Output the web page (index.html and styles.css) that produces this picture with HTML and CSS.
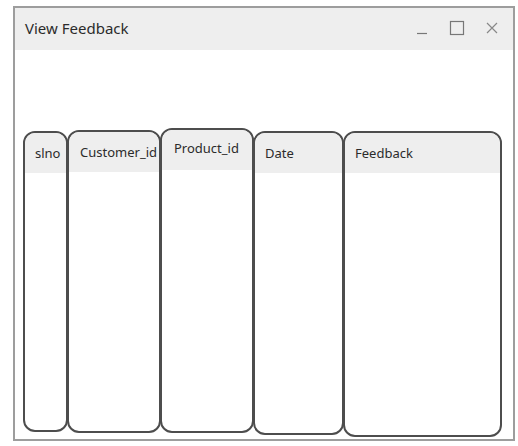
FILE: index.html
```html
<!DOCTYPE html>
<html>
<head>
<meta charset="utf-8">
<link rel="stylesheet" href="styles.css">
</head>
<body>
<div class="window">
  <div class="titlebar">
    <span class="title">View Feedback</span>
    <div class="controls">
      <svg class="ctl" width="12" height="14" viewBox="0 0 12 14"><line x1="1" y1="12.5" x2="11" y2="12.5" stroke="#777" stroke-width="1.2"/></svg>
      <svg class="ctl" width="16" height="16" viewBox="0 0 16 16"><rect x="1.5" y="1.5" width="13" height="13" fill="none" stroke="#777" stroke-width="1.2"/></svg>
      <svg class="ctl" width="12" height="12" viewBox="0 0 12 12"><path d="M1 1 L11 11 M11 1 L1 11" stroke="#888" stroke-width="1.2"/></svg>
    </div>
  </div>
  <div class="content">
    <div class="table">
      <div class="col col-slno"><div class="head">slno</div></div>
      <div class="col col-cust"><div class="head">Customer_id</div></div>
      <div class="col col-prod"><div class="head">Product_id</div></div>
      <div class="col col-date"><div class="head">Date</div></div>
      <div class="col col-feed"><div class="head">Feedback</div></div>
    </div>
  </div>
</div>
</body>
</html>
```
FILE: styles.css
```css
html, body {
  margin: 0;
  padding: 0;
  background: #fff;
}
body {
  font-family: "Noto Sans", "Open Sans", sans-serif;
  color: #333;
}
.window {
  box-sizing: border-box;
  margin: 6px 0 0 13px;
  width: 502px;
  height: 435px;
  border: 2px solid #9d9d9d;
  display: flex;
  flex-direction: column;
  background: #fff;
}
.titlebar {
  height: 42px;
  background: #eeeeee;
  display: flex;
  align-items: center;
  justify-content: space-between;
  padding: 0 15px 0 10px;
  flex-shrink: 0;
}
.title {
  font-size: 15px;
  color: #2b2b2b;
  margin-top: -3px;
}
.controls {
  display: flex;
  align-items: center;
  gap: 21px;
  margin-top: -2px;
}
.ctl {
  display: block;
}
.content {
  padding: 78px 0 0 8px;
}
.table {
  display: flex;
  align-items: flex-start;
}
.col {
  box-sizing: border-box;
  border: 2px solid #4d4d4d;
  border-radius: 12px;
  overflow: hidden;
  margin-left: -1px;
}
.col:first-child {
  margin-left: 0;
}
.head {
  background: #eeeeee;
  height: 40px;
  box-sizing: border-box;
  padding: 11px 0 0 10px;
  font-size: 13px;
  color: #2b2b2b;
  white-space: nowrap;
}
.col-slno { width: 45px; height: 301px; margin-top: 3px; }
.col-cust { width: 94px; height: 303px; margin-top: 2px; }
.col-cust .head { padding-left: 11px; }
.col-prod { width: 94px; height: 305px; margin-top: 0; }
.col-prod .head { padding-top: 9px; padding-left: 12px; }
.col-date { width: 91px; height: 304px; margin-top: 3px; }
.col-feed { width: 159px; height: 306px; margin-top: 3px; }
```
